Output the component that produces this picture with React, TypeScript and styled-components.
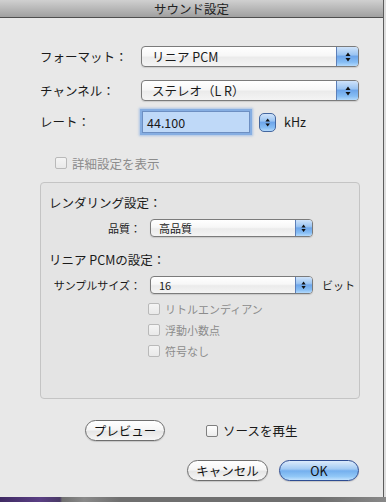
import React from "react";
import styled, { createGlobalStyle } from "styled-components";

const GlobalStyle = createGlobalStyle`
  html, body {
    margin: 0;
    padding: 0;
    background: #6a6a6a;
  }
  body {
    font-family: "Noto Sans CJK JP", "Noto Sans", sans-serif;
    color: #1a1a1a;
  }
`;

const Screen = styled.div`
  width: 386px;
  height: 502px;
  display: flex;
  flex-direction: column;
  overflow: hidden;
  background: #dedede;
`;

const WindowRow = styled.div`
  display: flex;
  height: 497px;
`;

const Window = styled.div`
  width: 383px;
  display: flex;
  flex-direction: column;
  background: #e8e8e8;
  border-right: 1px solid #5c5c5c;
`;

const Desktop = styled.div`
  height: 5px;
  background: linear-gradient(
    to right,
    #3f2a63 0,
    #5a3f84 40px,
    #4a3a66 60px,
    #707070 62px,
    #8a8a8a 84px,
    #6f6f6f 120px,
    #6f6f6f 320px,
    #888 386px
  );
`;

const TitleBar = styled.div`
  height: 17px;
  display: flex;
  align-items: center;
  justify-content: center;
  background: linear-gradient(to bottom, #d0d0d0 0%, #b8b8b8 50%, #a0a0a0 100%);
  border-bottom: 1px solid #4e4e4e;
  font-size: 12.5px;
  line-height: 17px;
  color: #222;
`;

const Body = styled.div`
  flex: 1;
  display: flex;
  flex-direction: column;
  padding: 28px 24px 0 40px;
`;

const FormRow = styled.div<{ $gap?: number }>`
  display: grid;
  grid-template-columns: 101px 1fr;
  align-items: center;
  margin-top: ${(p) => p.$gap ?? 0}px;
`;

const Label = styled.div`
  font-size: 12.5px;
  line-height: 16px;
  white-space: nowrap;
`;

const PopupBox = styled.div<{ $small?: boolean; $width?: number }>`
  display: flex;
  align-items: stretch;
  box-sizing: border-box;
  width: ${(p) => (p.$width ? `${p.$width}px` : "100%")};
  height: ${(p) => (p.$small ? "18px" : "21px")};
  border: 1px solid #7b7b7b;
  border-radius: 4px;
  overflow: hidden;
  background: linear-gradient(to bottom, #ffffff 0%, #f7f7f7 45%, #ebebeb 55%, #f4f4f4 100%);
  box-shadow: 0 1px 1px rgba(0, 0, 0, 0.12);
`;

const PopupText = styled.div<{ $small?: boolean }>`
  flex: 1;
  display: flex;
  align-items: center;
  padding-left: ${(p) => (p.$small ? "8px" : "10px")};
  font-size: ${(p) => (p.$small ? "11px" : "12.5px")};
  white-space: nowrap;
`;

const AquaBlue = `
  background: linear-gradient(
    to bottom,
    #cfe3fa 0%,
    #9cc5f2 40%,
    #6ea6ea 50%,
    #86bdf4 80%,
    #b4dafc 100%
  );
`;

const PopupArrows = styled.div<{ $small?: boolean }>`
  width: ${(p) => (p.$small ? "16px" : "21px")};
  display: flex;
  align-items: center;
  justify-content: center;
  border-left: 1px solid #5c7fb8;
  ${AquaBlue}
`;

const FieldRow = styled.div`
  display: flex;
  align-items: center;
  gap: 8px;
`;

const TextField = styled.div`
  box-sizing: border-box;
  width: 108px;
  height: 22px;
  margin: 1px 0 1px 1px;
  padding-left: 4px;
  display: flex;
  align-items: center;
  font-size: 12.5px;
  background: #bfd9f8;
  border: 1px solid #6d8fc2;
  box-shadow: 0 0 0 2px #86aee2, 0 0 2px 3px rgba(110, 160, 225, 0.5);
`;

const Stepper = styled.div`
  box-sizing: border-box;
  width: 17px;
  height: 19px;
  margin-left: 1px;
  display: flex;
  align-items: center;
  justify-content: center;
  border: 1px solid #44679f;
  border-radius: 5px;
  ${AquaBlue}
`;

const Unit = styled.div<{ $small?: boolean }>`
  font-size: ${(p) => (p.$small ? "11px" : "12.5px")};
  line-height: 16px;
  white-space: nowrap;
`;

const CheckRow = styled.label<{ $disabled?: boolean; $small?: boolean }>`
  display: flex;
  align-items: center;
  gap: 5px;
  height: 16px;
  font-size: ${(p) => (p.$small ? "11px" : "12.5px")};
  color: ${(p) => (p.$disabled ? "#8c8c8c" : "#1a1a1a")};
  white-space: nowrap;
`;

const CheckBox = styled.span<{ $disabled?: boolean }>`
  box-sizing: border-box;
  width: 12px;
  height: 12px;
  border-radius: 2px;
  border: 1px solid ${(p) => (p.$disabled ? "#b9b9b9" : "#7f7f7f")};
  background: ${(p) =>
    p.$disabled
      ? "linear-gradient(#f4f4f4, #e9e9e9)"
      : "linear-gradient(#ffffff, #ececec)"};
`;

const DetailRow = styled.div`
  margin: 21px 0 0 15px;
`;

const GroupBox = styled.div`
  box-sizing: border-box;
  margin-top: 11px;
  width: 320px;
  height: 217px;
  padding: 12px 0 0 8px;
  border: 1px solid #c4c4c4;
  border-radius: 4px;
  background: #e4e4e4;
  display: flex;
  flex-direction: column;
`;

const Heading = styled.div<{ $gap?: number }>`
  font-size: 12.5px;
  line-height: 16px;
  margin-top: ${(p) => p.$gap ?? 0}px;
`;

const SubGrid = styled.div`
  display: grid;
  grid-template-columns: 92px auto auto;
  column-gap: 9px;
  align-items: center;
  justify-content: start;
  margin-top: 8px;
`;

const SubLabel = styled.div`
  font-size: 11px;
  line-height: 16px;
  text-align: right;
  white-space: nowrap;
`;

const OptionList = styled.div`
  display: flex;
  flex-direction: column;
  gap: 5px;
  margin: 7px 0 0 99px;
`;

const ButtonRow = styled.div<{ $gap: number; $end?: boolean }>`
  display: flex;
  align-items: center;
  justify-content: ${(p) => (p.$end ? "flex-end" : "flex-start")};
  margin-top: ${(p) => p.$gap}px;
`;

const PushButton = styled.button<{ $primary?: boolean; $width: number }>`
  box-sizing: border-box;
  width: ${(p) => p.$width}px;
  height: 21px;
  padding: 0;
  border-radius: 11px;
  font-family: inherit;
  font-size: 12.5px;
  line-height: 18px;
  color: #111;
  border: 1px solid ${(p) => (p.$primary ? "#2d4c92" : "#6e6e6e")};
  background: ${(p) =>
    p.$primary
      ? "linear-gradient(to bottom, #dcebfb 0%, #a3cbf4 42%, #74afee 52%, #92c8f7 82%, #c2e2fd 100%)"
      : "linear-gradient(to bottom, #ffffff 0%, #f6f6f6 45%, #e6e6e6 55%, #f6f6f6 100%)"};
  box-shadow: 0 1px 1px rgba(0, 0, 0, 0.15);
`;

const Arrows = ({ size = 1 }: { size?: number }) => (
  <svg width={6 * size} height={10 * size} viewBox="0 0 6 10">
    <path d="M3 0.5 L5.5 4 L0.5 4 Z" fill="#111" />
    <path d="M0.5 6 L5.5 6 L3 9.5 Z" fill="#111" />
  </svg>
);

const Popup = ({ value, small, width }: { value: string; small?: boolean; width?: number }) => (
  <PopupBox $small={small} $width={width}>
    <PopupText $small={small}>{value}</PopupText>
    <PopupArrows $small={small}>
      <Arrows size={small ? 0.85 : 1} />
    </PopupArrows>
  </PopupBox>
);

const Check = ({ label, disabled, small }: { label: string; disabled?: boolean; small?: boolean }) => (
  <CheckRow $disabled={disabled} $small={small}>
    <CheckBox $disabled={disabled} />
    {label}
  </CheckRow>
);

export default function App() {
  return (
    <>
      <GlobalStyle />
      <Screen>
        <WindowRow>
          <Window>
            <TitleBar>サウンド設定</TitleBar>
            <Body>
              <FormRow>
                <Label>フォーマット：</Label>
                <Popup value="リニア PCM" />
              </FormRow>
              <FormRow $gap={13}>
                <Label>チャンネル：</Label>
                <Popup value="ステレオ（L R）" />
              </FormRow>
              <FormRow $gap={9}>
                <Label>レート：</Label>
                <FieldRow>
                  <TextField>44.100</TextField>
                  <Stepper>
                    <Arrows size={0.9} />
                  </Stepper>
                  <Unit>kHz</Unit>
                </FieldRow>
              </FormRow>

              <DetailRow>
                <Check label="詳細設定を表示" disabled />
              </DetailRow>

              <GroupBox>
                <Heading>レンダリング設定：</Heading>
                <SubGrid>
                  <SubLabel>品質：</SubLabel>
                  <Popup value="高品質" small width={163} />
                </SubGrid>
                <Heading $gap={15}>リニア PCMの設定：</Heading>
                <SubGrid>
                  <SubLabel>サンプルサイズ：</SubLabel>
                  <Popup value="16" small width={163} />
                  <Unit $small>ビット</Unit>
                </SubGrid>
                <OptionList>
                  <Check label="リトルエンディアン" disabled small />
                  <Check label="浮動小数点" disabled small />
                  <Check label="符号なし" disabled small />
                </OptionList>
              </GroupBox>

              <ButtonRow $gap={21}>
                <PushButton $width={80} style={{ marginLeft: 45 }}>
                  プレビュー
                </PushButton>
                <CheckRow style={{ marginLeft: 41 }}>
                  <CheckBox />
                  ソースを再生
                </CheckRow>
              </ButtonRow>

              <ButtonRow $gap={19} $end>
                <PushButton $width={81}>キャンセル</PushButton>
                <PushButton $width={80} $primary style={{ marginLeft: 11 }}>
                  OK
                </PushButton>
              </ButtonRow>
            </Body>
          </Window>
        </WindowRow>
        <Desktop />
      </Screen>
    </>
  );
}
